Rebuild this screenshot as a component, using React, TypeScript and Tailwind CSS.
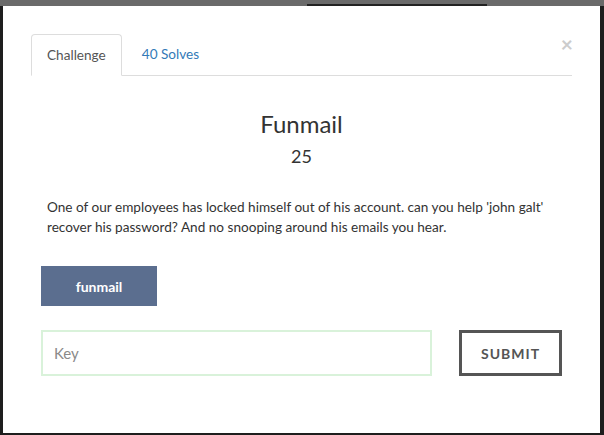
export default function App() {
  return (
    <div className="relative w-[604px] h-[435px] bg-[#1e1e1e] overflow-hidden font-['Lato','Liberation_Sans',sans-serif]">
      <div className="absolute inset-x-0 top-0 h-[6px] bg-[#6a6a6a]" />
      <div className="absolute left-[307px] top-[4px] w-[180px] h-[2px] bg-[#222]" />
      <div className="absolute left-[3px] top-[6px] w-[597px] h-[427px] bg-white px-[28px] pt-[28px]">
        <div className="relative flex border-b border-[#ddd] h-[42px]">
          <div className="-mb-px h-[42px] px-[15px] flex items-center border border-[#ddd] border-b-white rounded-t bg-white text-[13.6px] text-[#555]">
            Challenge
          </div>
          <div className="h-[41px] px-[20px] flex items-center text-[13.6px] text-[#337ab7]">40 Solves</div>
          <span className="absolute right-[-1px] top-[-1px] text-[21px] font-bold leading-none text-[#ccc]">×</span>
        </div>

        <h1 className="mt-[33px] text-center text-[24px] leading-[30px] text-[#333]">Funmail</h1>
        <div className="mt-[6px] text-center text-[18px] leading-[22px] text-[#333]">25</div>

        <p className="mt-[30px] px-[16px] text-[13.6px] leading-[20px] text-[#333]">
          One of our employees has locked himself out of his account. can you help 'john galt' recover his
          password? And no snooping around his emails you hear.
        </p>

        <div className="mt-[29px] ml-[10px]">
          <button className="w-[116px] h-[40px] bg-[#5b6e8f] text-white text-[14px] font-bold">funmail</button>
        </div>

        <div className="mt-[24px] ml-[10px] flex items-center">
          <div className="w-[391px] h-[46px] border-2 border-[#d9f2da] flex items-center px-[11px] text-[15px] text-[#8a8a8a]">
            Key
          </div>
          <button className="ml-[27px] w-[103px] h-[46px] border-[3px] border-[#555] text-[14px] font-bold tracking-[1px] text-[#555]">
            SUBMIT
          </button>
        </div>
      </div>
    </div>
  );
}
